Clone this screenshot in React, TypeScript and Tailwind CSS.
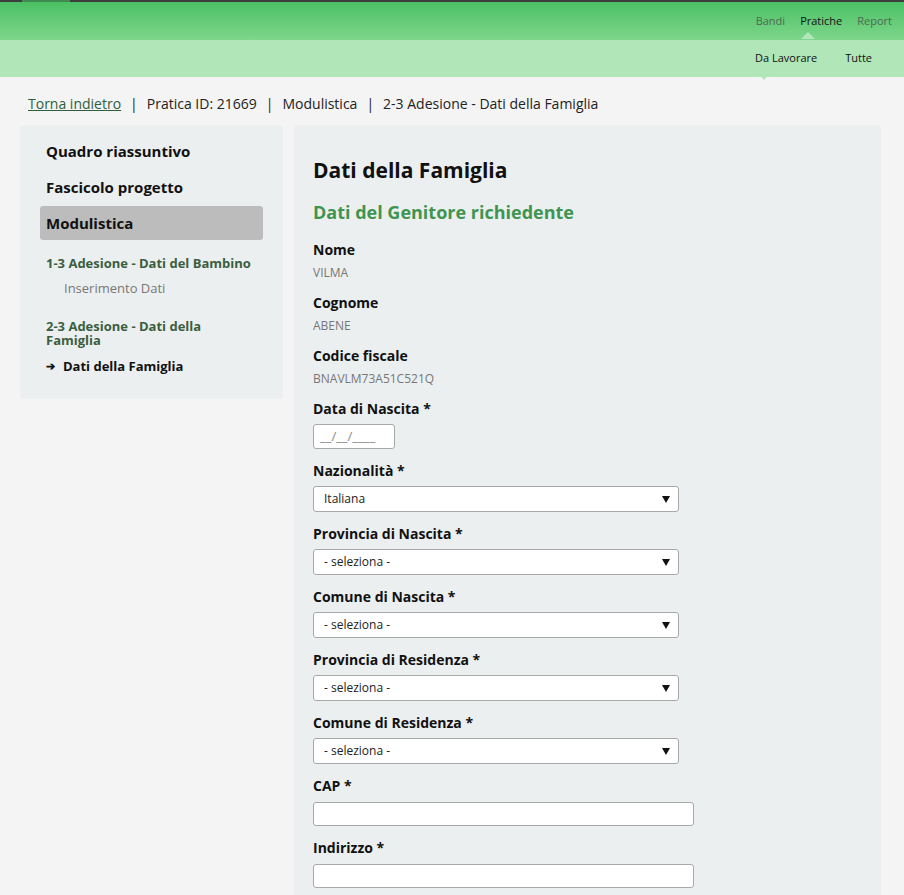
const font = "font-['Open_Sans',sans-serif]";

const topNav = [
  { label: "Bandi", active: false },
  { label: "Pratiche", active: true },
  { label: "Report", active: false },
];

const selects = [
  { label: "Nazionalità *", value: "Italiana" },
  { label: "Provincia di Nascita *", value: "- seleziona -" },
  { label: "Comune di Nascita *", value: "- seleziona -" },
  { label: "Provincia di Residenza *", value: "- seleziona -" },
  { label: "Comune di Residenza *", value: "- seleziona -" },
];

function Caret() {
  return (
    <svg width="8" height="8" viewBox="0 0 8 8" className="shrink-0">
      <path d="M0 1h8L4 8z" fill="#111" />
    </svg>
  );
}

function Label({ children }: { children: string }) {
  return <div className="text-[14px] font-bold leading-[18px] text-[#111]">{children}</div>;
}

function ReadOnlyField({ label, value }: { label: string; value: string }) {
  return (
    <div className="mb-[13px]">
      <Label>{label}</Label>
      <div className="mt-[6px] text-[12px] leading-[16px] text-[#777]">{value}</div>
    </div>
  );
}

function SelectField({ label, value }: { label: string; value: string }) {
  return (
    <div className="mb-[13px]">
      <Label>{label}</Label>
      <div className="mt-[6px] flex h-[26px] w-[366px] items-center justify-between rounded-[3px] border border-[#a9a9a9] bg-white pl-[10px] pr-[8px] text-[12px] text-[#222]">
        <span>{value}</span>
        <Caret />
      </div>
    </div>
  );
}

function TextField({ label }: { label: string }) {
  return (
    <div className="mb-[13px]">
      <Label>{label}</Label>
      <div className="mt-[7px] h-[24px] w-[381px] rounded-[3px] border border-[#a9a9a9] bg-white" />
    </div>
  );
}

export default function App() {
  return (
    <div className={`${font} min-h-[895px] bg-[#f4f4f4] text-[#111]`}>
      {/* top bars */}
      <div className="relative h-[2px] bg-[#3d3d3d]">
        <div className="absolute left-[22px] top-0 h-[2px] w-[48px] bg-[#3f8a4f]" />
      </div>
      <div className="relative flex h-[38px] items-center justify-end bg-gradient-to-b from-[#49c063] to-[#7dd68c] pr-[12px]">
        <nav className="flex gap-[15px] text-[11px]">
          {topNav.map((n) => (
            <span key={n.label} className={n.active ? "relative text-[#111]" : "text-[#4c6a50]"}>
              {n.label}
              {n.active && (
                <span className="absolute left-[1px] top-[19px] h-0 w-0 border-x-[7px] border-b-[7px] border-x-transparent border-b-[#b0e6b8]" />
              )}
            </span>
          ))}
        </nav>
      </div>
      <div className="relative flex h-[37px] items-center justify-end bg-[#b0e6b8] pr-[32px]">
        <nav className="flex gap-[28px] text-[11px] text-[#111]">
          <span className="relative">
            Da Lavorare
            <span className="absolute left-[2px] top-[22px] h-0 w-0 border-x-[7px] border-t-[8px] border-x-transparent border-t-[#b0e6b8]" />
          </span>
          <span>Tutte</span>
        </nav>
      </div>

      {/* breadcrumb */}
      <div className="flex items-center px-[28px] pt-[17px] text-[14px] leading-[20px] text-[#222]">
        <a className="text-[#2e5e3a] underline">Torna indietro</a>
        <span className="mx-[9px]">|</span>
        <span>Pratica ID: 21669</span>
        <span className="mx-[9px]">|</span>
        <span>Modulistica</span>
        <span className="mx-[9px]">|</span>
        <span>2-3 Adesione - Dati della Famiglia</span>
      </div>

      <div className="mt-[11px] flex items-start gap-[11px] pl-[20px] pr-[23px]">
        {/* sidebar */}
        <aside className="w-[263px] shrink-0 rounded-[4px] bg-[#eceff0] px-[20px] pb-[25px] pt-[9px]">
          <div className="px-[6px] py-[7px] text-[15px] font-bold leading-[20px]">Quadro riassuntivo</div>
          <div className="mt-[2px] px-[6px] py-[7px] text-[15px] font-bold leading-[20px]">Fascicolo progetto</div>
          <div className="mt-[2px] rounded-[3px] bg-[#bcbcbc] px-[6px] py-[7px] text-[15px] font-bold leading-[20px]">
            Modulistica
          </div>
          <div className="mt-[15px] px-[6px] text-[13px] font-bold leading-[16px] text-[#3b5e3f]">
            1-3 Adesione - Dati del Bambino
          </div>
          <div className="mt-[9px] pl-[24px] text-[13px] leading-[16px] text-[#777]">Inserimento Dati</div>
          <div className="mt-[23px] px-[6px] text-[13px] font-bold leading-[14px] text-[#3b5e3f]">
            2-3 Adesione - Dati della Famiglia
          </div>
          <div className="mt-[11px] flex items-center gap-[8px] px-[6px] text-[13px] font-bold leading-[16px]">
            <span className="text-[11px]">➔</span>
            <span>Dati della Famiglia</span>
          </div>
        </aside>

        {/* main */}
        <main className="min-h-[770px] flex-1 rounded-[4px] bg-[#eceff0] px-[19px] pt-[31px]">
          <h1 className="text-[21px] font-bold leading-[28px]">Dati della Famiglia</h1>
          <h2 className="mt-[16px] text-[18px] font-bold leading-[24px] text-[#3f9550]">
            Dati del Genitore richiedente
          </h2>
          <div className="mt-[17px]">
            <ReadOnlyField label="Nome" value="VILMA" />
            <ReadOnlyField label="Cognome" value="ABENE" />
            <ReadOnlyField label="Codice fiscale" value="BNAVLM73A51C521Q" />
            <div className="mb-[13px]">
              <Label>Data di Nascita *</Label>
              <div className="mt-[6px] flex h-[25px] w-[82px] items-center rounded-[3px] border border-[#a9a9a9] bg-white pl-[6px] text-[13px] text-[#888]">
                __/__/____
              </div>
            </div>
            {selects.map((s) => (
              <SelectField key={s.label} label={s.label} value={s.value} />
            ))}
            <TextField label="CAP *" />
            <TextField label="Indirizzo *" />
          </div>
        </main>
      </div>
    </div>
  );
}
